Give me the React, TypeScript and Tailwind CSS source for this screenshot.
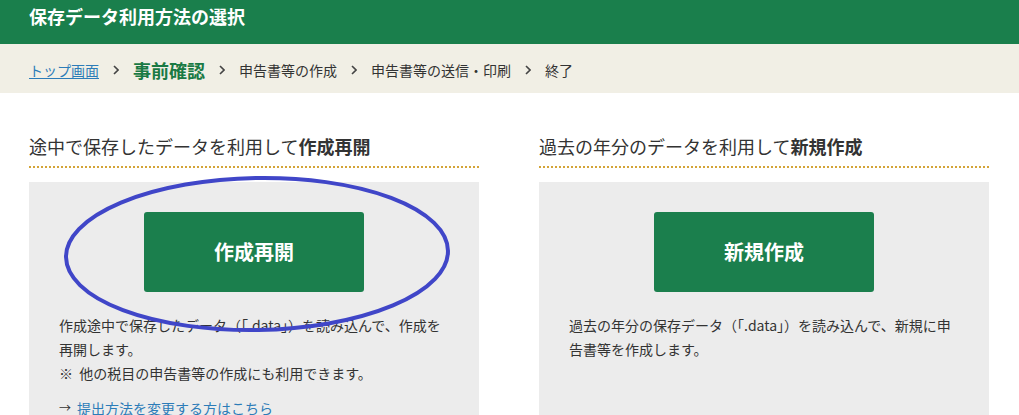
import React from "react";

const font = { fontFamily: '"Noto Sans CJK JP", "Noto Sans", sans-serif' };

function Chevron() {
  return (
    <svg viewBox="0 0 6 10" className="w-[6px] h-[10px] mx-[14px]">
      <path d="M1 1 L5 5 L1 9" fill="none" stroke="#444" strokeWidth="1.6" />
    </svg>
  );
}

function Section({
  lead,
  strong,
  button,
  children,
  oval,
}: {
  lead: string;
  strong: string;
  button: string;
  children: React.ReactNode;
  oval?: boolean;
}) {
  return (
    <div className="w-[450px]">
      <h2 className="text-[18px] leading-[26px] text-[#333] pb-[7px] border-b-2 border-dotted border-[#d4a437]">
        {lead}
        <span className="font-bold">{strong}</span>
      </h2>
      <div className="relative mt-[14px] bg-[#ececec] h-[240px] px-[30px] pt-[30px]">
        <div className="flex justify-center">
          <button className="w-[220px] h-[80px] rounded-[3px] bg-[#1b7f4d] text-white text-[20px] font-bold">
            {button}
          </button>
        </div>
        <div className="mt-[21px] text-[14px] leading-[24px] text-[#333] whitespace-nowrap">
          {children}
        </div>
        {oval && (
          <svg
            className="absolute left-0 top-0 w-[450px] h-[160px] overflow-visible pointer-events-none"
            viewBox="0 0 450 160"
          >
            <ellipse
              cx="228"
              cy="72"
              rx="191"
              ry="76"
              fill="none"
              stroke="#4046c8"
              strokeWidth="4"
              transform="rotate(-1 228 72)"
            />
          </svg>
        )}
      </div>
    </div>
  );
}

export default function App() {
  return (
    <div className="w-[1019px] h-[415px] overflow-hidden bg-white" style={font}>
      <header className="h-[44px] bg-[#1a7f4c] px-[29px] pt-[4px]">
        <h1 className="text-white text-[18px] font-bold leading-[24px]">
          保存データ利用方法の選択
        </h1>
      </header>

      <nav className="h-[49px] bg-[#f1efe5] px-[29px] flex items-center pt-[3px] text-[14px] text-[#333]">
        <a href="#" className="text-[#2c7cb8] underline underline-offset-2">
          トップ画面
        </a>
        <Chevron />
        <span className="text-[18px] font-bold text-[#1a7a44]">事前確認</span>
        <Chevron />
        <span>申告書等の作成</span>
        <Chevron />
        <span>申告書等の送信・印刷</span>
        <Chevron />
        <span>終了</span>
      </nav>

      <main className="flex gap-[60px] px-[29px] pt-[40px]">
        <Section lead="途中で保存したデータを利用して" strong="作成再開" button="作成再開" oval>
          <p>
            作成途中で保存したデータ（「.data」）を読み込んで、作成を
            <br />
            再開します。
          </p>
          <p>※&nbsp;&nbsp;他の税目の申告書等の作成にも利用できます。</p>
          <a href="#" className="mt-[11px] flex items-center text-[#2c7cb8] no-underline">
            <span className="text-[#333] text-[12px] mr-[6px]">→</span>
            提出方法を変更する方はこちら
          </a>
        </Section>
        <Section lead="過去の年分のデータを利用して" strong="新規作成" button="新規作成">
          <p>
            過去の年分の保存データ（「.data」）を読み込んで、新規に申
            <br />
            告書等を作成します。
          </p>
        </Section>
      </main>
    </div>
  );
}
